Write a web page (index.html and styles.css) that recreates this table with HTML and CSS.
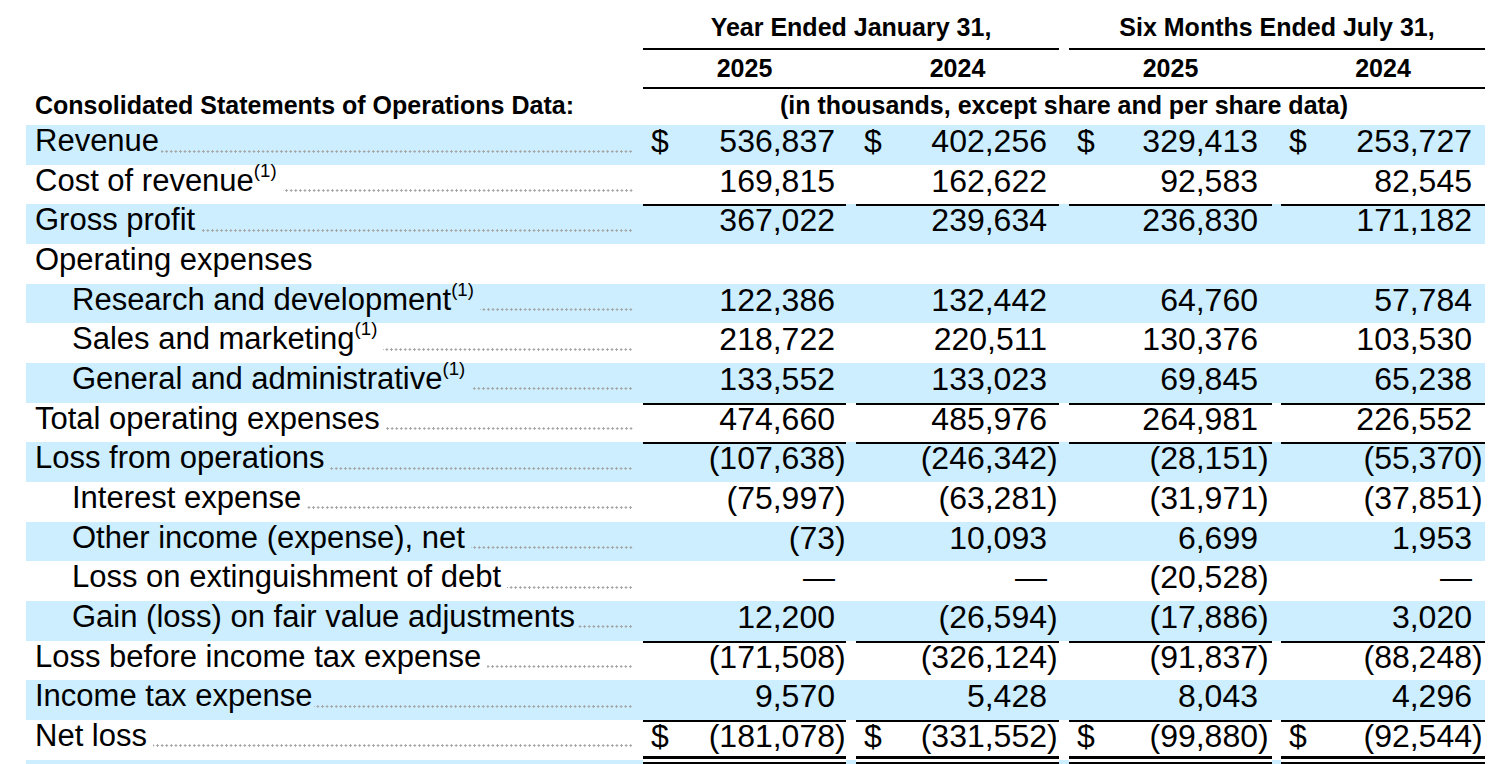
FILE: index.html
```html
<!DOCTYPE html>
<html lang="en">
<head>
<meta charset="utf-8">
<title>Consolidated Statements of Operations Data</title>
<link rel="stylesheet" href="styles.css">
</head>
<body>
<div class="stmt">
  <div class="row h1">
    <div class="lab"></div>
    <div class="hd span-a">Year Ended January 31,</div>
    <div class="gap"></div>
    <div class="hd span-b">Six Months Ended July 31,</div>
  </div>
  <div class="row h2">
    <div class="lab"></div>
    <div class="hd yr c1">2025</div>
    <div class="gap rl"></div>
    <div class="hd yr c2">2024</div>
    <div class="gap rl"></div>
    <div class="hd yr c3">2025</div>
    <div class="gap rl"></div>
    <div class="hd yr c4">2024</div>
  </div>
  <div class="row h3">
    <div class="lab hd">Consolidated Statements of Operations Data:</div>
    <div class="hd span-all">(in thousands, except share and per share data)</div>
  </div>

  <div class="row hl">
    <div class="lab"><span class="t">Revenue</span><span class="dots tight"></span></div>
    <div class="n"><span class="cur">$</span>536,837</div><div class="p"></div><div class="gap"></div>
    <div class="n"><span class="cur">$</span>402,256</div><div class="p"></div><div class="gap"></div>
    <div class="n"><span class="cur">$</span>329,413</div><div class="p"></div><div class="gap"></div>
    <div class="n"><span class="cur">$</span>253,727</div><div class="p"></div>
  </div>
  <div class="row">
    <div class="lab"><span class="t">Cost of revenue<sup>(1)</sup></span><span class="dots"></span></div>
    <div class="n">169,815</div><div class="p"></div><div class="gap"></div>
    <div class="n">162,622</div><div class="p"></div><div class="gap"></div>
    <div class="n">92,583</div><div class="p"></div><div class="gap"></div>
    <div class="n">82,545</div><div class="p"></div>
  </div>
  <div class="row hl rule">
    <div class="lab"><span class="t">Gross profit</span><span class="dots"></span></div>
    <div class="n">367,022</div><div class="p"></div><div class="gap"></div>
    <div class="n">239,634</div><div class="p"></div><div class="gap"></div>
    <div class="n">236,830</div><div class="p"></div><div class="gap"></div>
    <div class="n">171,182</div><div class="p"></div>
  </div>
  <div class="row">
    <div class="lab"><span class="t">Operating expenses</span></div>
    <div class="n"></div><div class="p"></div><div class="gap"></div>
    <div class="n"></div><div class="p"></div><div class="gap"></div>
    <div class="n"></div><div class="p"></div><div class="gap"></div>
    <div class="n"></div><div class="p"></div>
  </div>
  <div class="row hl">
    <div class="lab ind"><span class="t">Research and development<sup>(1)</sup></span><span class="dots"></span></div>
    <div class="n">122,386</div><div class="p"></div><div class="gap"></div>
    <div class="n">132,442</div><div class="p"></div><div class="gap"></div>
    <div class="n">64,760</div><div class="p"></div><div class="gap"></div>
    <div class="n">57,784</div><div class="p"></div>
  </div>
  <div class="row">
    <div class="lab ind"><span class="t">Sales and marketing<sup>(1)</sup></span><span class="dots"></span></div>
    <div class="n">218,722</div><div class="p"></div><div class="gap"></div>
    <div class="n">220,511</div><div class="p"></div><div class="gap"></div>
    <div class="n">130,376</div><div class="p"></div><div class="gap"></div>
    <div class="n">103,530</div><div class="p"></div>
  </div>
  <div class="row hl">
    <div class="lab ind"><span class="t">General and administrative<sup>(1)</sup></span><span class="dots"></span></div>
    <div class="n">133,552</div><div class="p"></div><div class="gap"></div>
    <div class="n">133,023</div><div class="p"></div><div class="gap"></div>
    <div class="n">69,845</div><div class="p"></div><div class="gap"></div>
    <div class="n">65,238</div><div class="p"></div>
  </div>
  <div class="row rule">
    <div class="lab"><span class="t">Total operating expenses</span><span class="dots"></span></div>
    <div class="n">474,660</div><div class="p"></div><div class="gap"></div>
    <div class="n">485,976</div><div class="p"></div><div class="gap"></div>
    <div class="n">264,981</div><div class="p"></div><div class="gap"></div>
    <div class="n">226,552</div><div class="p"></div>
  </div>
  <div class="row hl rule">
    <div class="lab"><span class="t">Loss from operations</span><span class="dots"></span></div>
    <div class="n">(107,638</div><div class="p">)</div><div class="gap"></div>
    <div class="n">(246,342</div><div class="p">)</div><div class="gap"></div>
    <div class="n">(28,151</div><div class="p">)</div><div class="gap"></div>
    <div class="n">(55,370</div><div class="p">)</div>
  </div>
  <div class="row">
    <div class="lab ind"><span class="t">Interest expense</span><span class="dots"></span></div>
    <div class="n">(75,997</div><div class="p">)</div><div class="gap"></div>
    <div class="n">(63,281</div><div class="p">)</div><div class="gap"></div>
    <div class="n">(31,971</div><div class="p">)</div><div class="gap"></div>
    <div class="n">(37,851</div><div class="p">)</div>
  </div>
  <div class="row hl">
    <div class="lab ind"><span class="t">Other income (expense), net</span><span class="dots"></span></div>
    <div class="n">(73</div><div class="p">)</div><div class="gap"></div>
    <div class="n">10,093</div><div class="p"></div><div class="gap"></div>
    <div class="n">6,699</div><div class="p"></div><div class="gap"></div>
    <div class="n">1,953</div><div class="p"></div>
  </div>
  <div class="row">
    <div class="lab ind"><span class="t">Loss on extinguishment of debt</span><span class="dots"></span></div>
    <div class="n">—</div><div class="p"></div><div class="gap"></div>
    <div class="n">—</div><div class="p"></div><div class="gap"></div>
    <div class="n">(20,528</div><div class="p">)</div><div class="gap"></div>
    <div class="n">—</div><div class="p"></div>
  </div>
  <div class="row hl">
    <div class="lab ind"><span class="t">Gain (loss) on fair value adjustments</span><span class="dots tight"></span></div>
    <div class="n">12,200</div><div class="p"></div><div class="gap"></div>
    <div class="n">(26,594</div><div class="p">)</div><div class="gap"></div>
    <div class="n">(17,886</div><div class="p">)</div><div class="gap"></div>
    <div class="n">3,020</div><div class="p"></div>
  </div>
  <div class="row rule">
    <div class="lab"><span class="t">Loss before income tax expense</span><span class="dots"></span></div>
    <div class="n">(171,508</div><div class="p">)</div><div class="gap"></div>
    <div class="n">(326,124</div><div class="p">)</div><div class="gap"></div>
    <div class="n">(91,837</div><div class="p">)</div><div class="gap"></div>
    <div class="n">(88,248</div><div class="p">)</div>
  </div>
  <div class="row hl">
    <div class="lab"><span class="t">Income tax expense</span><span class="dots tight"></span></div>
    <div class="n">9,570</div><div class="p"></div><div class="gap"></div>
    <div class="n">5,428</div><div class="p"></div><div class="gap"></div>
    <div class="n">8,043</div><div class="p"></div><div class="gap"></div>
    <div class="n">4,296</div><div class="p"></div>
  </div>
  <div class="row rule last">
    <div class="lab"><span class="t">Net loss</span><span class="dots"></span></div>
    <div class="n"><span class="cur">$</span>(181,078</div><div class="p">)</div><div class="gap"></div>
    <div class="n"><span class="cur">$</span>(331,552</div><div class="p">)</div><div class="gap"></div>
    <div class="n"><span class="cur">$</span>(99,880</div><div class="p">)</div><div class="gap"></div>
    <div class="n"><span class="cur">$</span>(92,544</div><div class="p">)</div>
  </div>
  <div class="row tail">
    <div class="lab"></div>
    <div class="n"></div><div class="p"></div><div class="gap"></div>
    <div class="n"></div><div class="p"></div><div class="gap"></div>
    <div class="n"></div><div class="p"></div><div class="gap"></div>
    <div class="n"></div><div class="p"></div>
  </div>
</div>
</body>
</html>
```
FILE: styles.css
```css
html, body {
  margin: 0;
  padding: 0;
  background: #fff;
}

body {
  font-family: "Liberation Sans", Arial, Helvetica, sans-serif;
  color: #000;
  height: 764px;
  overflow: hidden;
}

.stmt {
  margin-left: 26px;
  width: 1459px;
}

.row {
  display: grid;
  grid-template-columns: 617px 192px 11px 10px 191px 12px 10px 189px 14px 9px 191px 13px;
  height: 39.67px;
  font-size: 31px;
  line-height: 32px;
}

.row > div {
  min-width: 0;
  white-space: nowrap;
}

.hl {
  background: #cceeff;
}

/* header rows */
.hd {
  font-weight: bold;
  font-size: 25px;
  line-height: 30px;
  text-align: center;
}

.h1 {
  height: 50px;
}

.h1 .hd {
  align-self: end;
  border-bottom: 2px solid #000;
  padding-bottom: 6px;
}

.span-a { grid-column: 2 / 7; }
.span-b { grid-column: 8 / 13; }
.h1 .gap { grid-column: 7 / 8; }

.h2 {
  height: 39px;
}

.h2 .hd {
  align-self: stretch;
  border-bottom: 2px solid #000;
  padding-top: 3px;
}

.h2 .c1 { grid-column: 2 / 4; }
.h2 .c2 { grid-column: 5 / 7; }
.h2 .c3 { grid-column: 8 / 10; }
.h2 .c4 { grid-column: 11 / 13; }
.h2 .rl { border-bottom: 2px solid #000; }
.h2 .lab { border-bottom: 0; }
.h2 .lab.hd { border: 0; }

.h3 {
  height: 36px;
}

.h3 .hd {
  padding-top: 1px;
}

.h3 .lab.hd {
  text-align: left;
  padding-left: 9px;
}

.span-all { grid-column: 2 / 13; }

/* labels */
.lab {
  display: flex;
  align-items: flex-start;
  padding-left: 9px;
  padding-right: 10px;
}

.lab.ind {
  padding-left: 46px;
}

.lab .t {
  flex: none;
}

sup {
  font-size: 0.6em;
  line-height: 0;
  vertical-align: 0.78em;
}

.dots {
  flex: 1;
  height: 3px;
  margin-top: 24.5px;
  margin-left: 6px;
  background-image: radial-gradient(circle at center, #a6a6a6 0 1px, transparent 1.3px);
  background-size: 4.6px 3px;
  background-position: right center;
  background-repeat: repeat-x;
}

.dots.tight {
  margin-left: 2px;
}

/* numbers */
.n,
.p {
  font-size: 32px;
}

.n {
  display: flex;
  justify-content: flex-end;
  padding-left: 8px;
}

.n .cur {
  margin-right: auto;
}

.p {
  text-align: left;
}

.rule .n,
.rule .p {
  box-shadow: inset 0 2px 0 #000;
}

.last {
  height: 36px;
}

.tail {
  height: 12px;
}

.tail .lab,
.tail .gap {
  background: linear-gradient(#fff 0 4px, #cceeff 4px);
}

.tail .n,
.tail .p {
  background: linear-gradient(#000 0 3px, #fff 3px 6px, #000 6px 8px, #cceeff 8px);
}
```
